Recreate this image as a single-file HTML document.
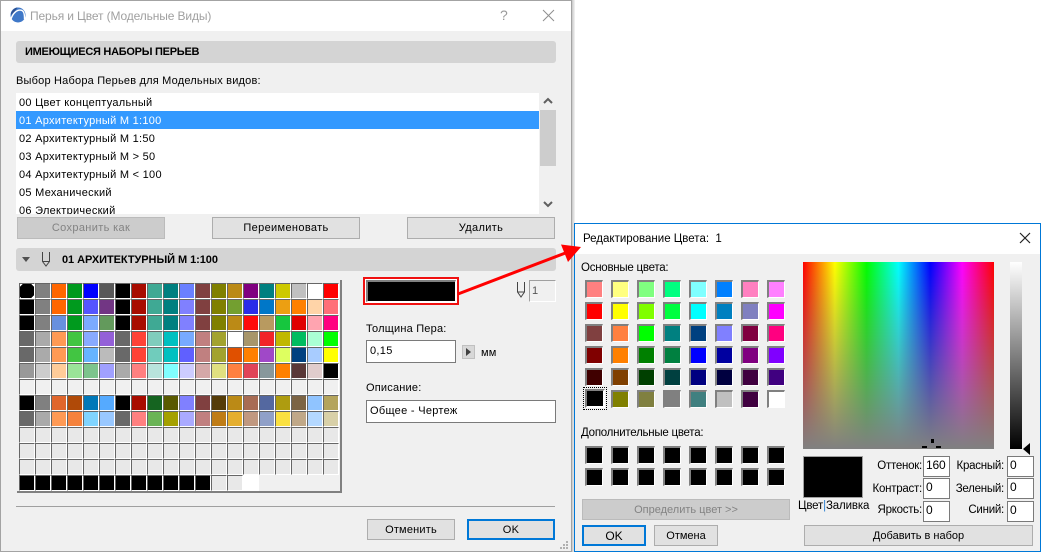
<!DOCTYPE html>
<html lang="ru"><head><meta charset="utf-8"><title>Перья и Цвет</title>
<style>
html,body{margin:0;padding:0;background:#fff}
#p{position:relative;width:1041px;height:552px;overflow:hidden;background:#fff;font:11px "Liberation Sans",sans-serif;color:#000}
#p div,#p span,#p svg{position:absolute;box-sizing:border-box}
.t{white-space:nowrap;line-height:14px;letter-spacing:.2px}
.b{background:#e1e1e1;border:1px solid #adadad;text-align:center;line-height:21px;letter-spacing:.35px;white-space:nowrap}
.d{background:#ccc;border-color:#bbb;color:#838383}
.f{border:2px solid #0078d7;line-height:19px}
.h{background:#d4d4d4;border-radius:3px}
.in{background:#fff;border:1px solid #7a7a7a;white-space:nowrap;letter-spacing:.3px;padding-left:3px}
.r{left:19px;white-space:nowrap;letter-spacing:.28px;line-height:18px;height:18px}
#g{left:19px;top:283px;width:320px;display:flex;flex-wrap:wrap}
#g i{display:block;box-sizing:border-box;width:16px;height:16px;border-top:1px solid #666;border-left:1px solid #666;border-right:1px solid #fff;border-bottom:1px solid #fff}
.c{width:18px;height:18px;border-top:2px solid #808080;border-left:2px solid #808080;border-right:1px solid #fff;border-bottom:1px solid #fff}
.e{font-size:11.5px;letter-spacing:-.25px;white-space:nowrap;line-height:14px;text-align:right}
.n{font-size:12px;background:#fff;border:1px solid #7a7a7a;width:27px;height:21px;line-height:17px;padding-left:2px;letter-spacing:-.2px}
.k{font-size:11px;letter-spacing:0}
</style></head><body><div id="p">

<!-- main dialog -->
<div style="left:0;top:0;width:572px;height:552px;background:#f0f0f0;border:1px solid #a3a3a3;border-left-color:#a3a3a3"></div>
<div style="left:572px;top:0;width:3px;height:552px;background:linear-gradient(to right,#c8c8c8,#f4f4f4)"></div>
<div style="left:1px;top:1px;width:570px;height:30px;background:#fff"></div>
<svg style="left:9px;top:7px" width="18" height="16" viewBox="0 0 18 16"><circle cx="9" cy="8" r="7.500" fill="#3f78c8"/><path d="M2 12C4 6 8 2.500 12 3.200C15 3.800 15.500 7 15.500 12" fill="none" stroke="#fff" stroke-width="1.400"/><path d="M2 8A7.500 7.500 0 0 1 8.500 .5L5.500 4.500Z" fill="#2c4f8f"/></svg>
<div class="t" style="left:30px;top:9px;font-size:12px;color:#a0a0a0;letter-spacing:-.13px">Перья и Цвет (Модельные Виды)</div>
<div class="t" style="left:500px;top:8px;font-size:14px;color:#9a9a9a;letter-spacing:0">?</div>
<svg style="left:542px;top:9px" width="13" height="13" viewBox="0 0 13 13"><path d="M1 1L12 12M12 1L1 12" stroke="#8f8f8f" stroke-width="1"/></svg>

<div class="h" style="left:16px;top:41px;width:540px;height:22px"></div>
<div class="t" style="left:25px;top:45px;font-weight:bold;letter-spacing:-.27px">ИМЕЮЩИЕСЯ НАБОРЫ ПЕРЬЕВ</div>
<div class="t" style="left:16px;top:74px">Выбор Набора Перьев для Модельных видов:</div>

<div style="left:16px;top:93px;width:523px;height:121px;background:#fff;overflow:hidden">
<div style="left:0;top:18px;width:523px;height:18px;background:#3399ff"></div>
<div class="r" style="left:3px;top:1px">00 Цвет концептуальный</div>
<div class="r" style="left:3px;top:19px;color:#fff">01 Архитектурный М 1:100</div>
<div class="r" style="left:3px;top:37px">02 Архитектурный М 1:50</div>
<div class="r" style="left:3px;top:55px">03 Архитектурный М &gt; 50</div>
<div class="r" style="left:3px;top:73px">04 Архитектурный М &lt; 100</div>
<div class="r" style="left:3px;top:91px">05 Механический</div>
<div class="r" style="left:3px;top:109px">06 Электрический</div>
</div>
<div style="left:540px;top:110px;width:16px;height:56px;background:#cdcdcd"></div>
<svg style="left:543px;top:97px" width="10" height="8" viewBox="0 0 10 8"><path d="M1 6L5 2L9 6" fill="none" stroke="#606060" stroke-width="2"/></svg>
<svg style="left:543px;top:200px" width="10" height="8" viewBox="0 0 10 8"><path d="M1 2L5 6L9 2" fill="none" stroke="#606060" stroke-width="2"/></svg>

<div class="b d" style="left:17px;top:217px;width:148px;height:22px">Сохранить как</div>
<div class="b" style="left:212px;top:217px;width:148px;height:22px">Переименовать</div>
<div class="b" style="left:407px;top:217px;width:148px;height:22px">Удалить</div>

<div class="h" style="left:16px;top:248px;width:540px;height:23px"></div>
<svg style="left:21px;top:256px" width="10" height="7" viewBox="0 0 10 7"><path d="M1 1H9L5 6Z" fill="#505050"/></svg>
<svg style="left:40px;top:251px" width="12" height="17" viewBox="0 0 12 17"><path d="M2.500 1V10.500L6 15L9.500 10.500V1M2.500 10.500H9.500" fill="none" stroke="#444" stroke-width="1"/></svg>
<div class="t" style="left:62px;top:253px;font-weight:bold;letter-spacing:-.06px">01 АРХИТЕКТУРНЫЙ М 1:100</div>

<!-- pen palette -->
<div style="left:17px;top:280px;width:325px;height:213px;background:#f0f0f0;border-right:2px solid #808080;border-bottom:2px solid #808080"></div>
<div id="g"><i style="background:linear-gradient(135deg,#fff 2px,transparent 2px),linear-gradient(-135deg,#fff 2px,transparent 2px),linear-gradient(45deg,#fff 1px,transparent 1px),linear-gradient(-45deg,#fff 2px,transparent 2px),#000"></i><i style="background:#808080"></i><i style="background:#ff6600"></i><i style="background:#009a1e"></i><i style="background:#0000ff"></i><i style="background:#595959"></i><i style="background:#000"></i><i style="background:#a80c00"></i><i style="background:#3fa994"></i><i style="background:#008080"></i><i style="background:#6a80ff"></i><i style="background:#804040"></i><i style="background:#808000"></i><i style="background:#bb8a16"></i><i style="background:#800080"></i><i style="background:#008080"></i><i style="background:#cdc900"></i><i style="background:#c0c0c0"></i><i style="background:#fff"></i><i style="background:#f00"></i>
<i style="background:#000"></i><i style="background:#808080"></i><i style="background:#ff6600"></i><i style="background:#009a1e"></i><i style="background:#5555ff"></i><i style="background:#723684"></i><i style="background:#000"></i><i style="background:#a80c00"></i><i style="background:#3fa994"></i><i style="background:#008080"></i><i style="background:#8080ff"></i><i style="background:#804040"></i><i style="background:#808000"></i><i style="background:#739f30"></i><i style="background:#2a2ce8"></i><i style="background:#0077c8"></i><i style="background:#ec9f12"></i><i style="background:#ff8000"></i><i style="background:#ffd4a8"></i><i style="background:#ff7078"></i>
<i style="background:#000"></i><i style="background:#808080"></i><i style="background:#6890de"></i><i style="background:#009a1e"></i><i style="background:#7caaff"></i><i style="background:#639a5c"></i><i style="background:#000"></i><i style="background:#a80c00"></i><i style="background:#3fa994"></i><i style="background:#008080"></i><i style="background:#8080ff"></i><i style="background:#804040"></i><i style="background:#808000"></i><i style="background:#bb8a16"></i><i style="background:#ff0a0a"></i><i style="background:#b89a60"></i><i style="background:#16c63e"></i><i style="background:#e00000"></i><i style="background:#ffa4b0"></i><i style="background:#ff0080"></i>
<i style="background:#696969"></i><i style="background:#aaa"></i><i style="background:#ff9a55"></i><i style="background:#42c542"></i><i style="background:#88aaff"></i><i style="background:#9460d8"></i><i style="background:#696969"></i><i style="background:#ff4236"></i><i style="background:#80ccbc"></i><i style="background:#00c0c0"></i><i style="background:#77aaff"></i><i style="background:#c08080"></i><i style="background:#a2a22e"></i><i style="background:#fff"></i><i style="background:#a8966a"></i><i style="background:#f22429"></i><i style="background:#c0b800"></i><i style="background:#00bc60"></i><i style="background:#aaffd4"></i><i style="background:#0f0"></i>
<i style="background:#696969"></i><i style="background:#aaa"></i><i style="background:#ff9a55"></i><i style="background:#42c542"></i><i style="background:#66b4ff"></i><i style="background:#bbb"></i><i style="background:#696969"></i><i style="background:#ff4236"></i><i style="background:#70ccbc"></i><i style="background:#00c0c0"></i><i style="background:#6060ff"></i><i style="background:#c08080"></i><i style="background:#a2a22e"></i><i style="background:#e05000"></i><i style="background:#ff8000"></i><i style="background:#a048c8"></i><i style="background:#deff60"></i><i style="background:#004080"></i><i style="background:#a8ccff"></i><i style="background:#ff0"></i>
<i style="background:#999"></i><i style="background:#ccc"></i><i style="background:#fc9"></i><i style="background:#9ae498"></i><i style="background:#7cc48c"></i><i style="background:#a0a0ff"></i><i style="background:#aaa"></i><i style="background:#ff8080"></i><i style="background:#b8e4dc"></i><i style="background:#80ffff"></i><i style="background:#ccf"></i><i style="background:#d4a8a8"></i><i style="background:#e0e080"></i><i style="background:#ff8040"></i><i style="background:#e04458"></i><i style="background:#88989c"></i><i style="background:#ff8000"></i><i style="background:#5a3838"></i><i style="background:#e0cccc"></i><i style="background:#000"></i>
<i></i><i></i><i></i><i></i><i></i><i></i><i></i><i></i><i></i><i></i><i></i><i></i><i></i><i></i><i></i><i></i><i></i><i></i><i></i><i></i>
<i style="background:#000"></i><i style="background:#808080"></i><i style="background:#e0662c"></i><i style="background:#b04a08"></i><i style="background:#0078b8"></i><i style="background:#55aaff"></i><i style="background:#000"></i><i style="background:#a80c00"></i><i style="background:#156420"></i><i style="background:#5a5a00"></i><i style="background:#8080ff"></i><i style="background:#804040"></i><i style="background:#553c08"></i><i style="background:#bb8a16"></i><i style="background:#a86c54"></i><i style="background:#5468a0"></i><i style="background:#ae9c10"></i><i style="background:#7c6444"></i><i style="background:#90c4ff"></i><i style="background:#b4a45c"></i>
<i style="background:#696969"></i><i style="background:#aaa"></i><i style="background:#ff9a55"></i><i style="background:#f5823c"></i><i style="background:#80d4ff"></i><i style="background:#99c8ff"></i><i style="background:#696969"></i><i style="background:#ff8080"></i><i style="background:#6ab456"></i><i style="background:#a4a000"></i><i style="background:#aaf"></i><i style="background:#c08080"></i><i style="background:#bf7c16"></i><i style="background:#e5ae2e"></i><i style="background:#c09880"></i><i style="background:#90a0c8"></i><i style="background:#fae040"></i><i style="background:#c0a888"></i><i style="background:#b4d8ff"></i><i style="background:#d8d0a8"></i>
<i style="background:#e8e8e8"></i><i style="background:#e8e8e8"></i><i style="background:#e8e8e8"></i><i style="background:#e8e8e8"></i><i style="background:#e8e8e8"></i><i style="background:#e8e8e8"></i><i style="background:#e8e8e8"></i><i style="background:#e8e8e8"></i><i style="background:#e8e8e8"></i><i style="background:#e8e8e8"></i><i style="background:#e8e8e8"></i><i style="background:#e8e8e8"></i><i style="background:#e8e8e8"></i><i style="background:#e8e8e8"></i><i style="background:#e8e8e8"></i><i style="background:#e8e8e8"></i><i style="background:#e8e8e8"></i><i style="background:#e8e8e8"></i><i style="background:#e8e8e8"></i><i style="background:#e8e8e8"></i>
<i style="background:#e8e8e8"></i><i style="background:#e8e8e8"></i><i style="background:#e8e8e8"></i><i style="background:#e8e8e8"></i><i style="background:#e8e8e8"></i><i style="background:#e8e8e8"></i><i style="background:#e8e8e8"></i><i style="background:#e8e8e8"></i><i style="background:#e8e8e8"></i><i style="background:#e8e8e8"></i><i style="background:#e8e8e8"></i><i style="background:#e8e8e8"></i><i style="background:#e8e8e8"></i><i style="background:#e8e8e8"></i><i style="background:#e8e8e8"></i><i style="background:#e8e8e8"></i><i style="background:#e8e8e8"></i><i style="background:#e8e8e8"></i><i style="background:#e8e8e8"></i><i style="background:#e8e8e8"></i>
<i style="background:#e8e8e8"></i><i style="background:#e8e8e8"></i><i style="background:#e8e8e8"></i><i style="background:#e8e8e8"></i><i style="background:#e8e8e8"></i><i style="background:#e8e8e8"></i><i style="background:#e8e8e8"></i><i style="background:#e8e8e8"></i><i style="background:#e8e8e8"></i><i style="background:#e8e8e8"></i><i style="background:#e8e8e8"></i><i style="background:#e8e8e8"></i><i style="background:#e8e8e8"></i><i style="background:#e8e8e8"></i><i style="background:#e8e8e8"></i><i style="background:#e8e8e8"></i><i style="background:#e8e8e8"></i><i style="background:#e8e8e8"></i><i style="background:#e8e8e8"></i><i style="background:#e8e8e8"></i>
<i style="background:#000"></i><i style="background:#000"></i><i style="background:#000"></i><i style="background:#000"></i><i style="background:#000"></i><i style="background:#000"></i><i style="background:#000"></i><i style="background:#000"></i><i style="background:#000"></i><i style="background:#000"></i><i style="background:#000"></i><i style="background:#000"></i><i style="background:#e8e8e8"></i><i style="background:#e8e8e8"></i><i style="border:0;background:#fff"></i></div>

<!-- pen settings -->
<div style="left:363px;top:277px;width:96px;height:28px;border:2px solid #f01010;background:#fff"></div>
<div style="left:366px;top:280px;width:90px;height:22px;background:#000;border:1px solid #808080;border-top-width:2px;border-left-width:2px;border-right-color:#fff;border-bottom-color:#fff"></div>
<svg style="left:515px;top:281px" width="12" height="18" viewBox="0 0 12 18"><path d="M2.500 1V11L6 16L9.500 11V1M2.500 11H9.500" fill="none" stroke="#444" stroke-width="1"/></svg>
<div class="t" style="left:529px;top:280px;width:27px;height:22px;background:#f0f0f0;border:1px solid #fff;border-left:1px solid #a0a0a0;border-top:1px solid #a0a0a0;line-height:20px;padding-left:2px;color:#555">1</div>
<div class="t" style="left:366px;top:322px">Толщина Пера:</div>
<div class="in" style="left:366px;top:340px;width:90px;height:23px;line-height:21px">0,15</div>
<div style="left:462px;top:345px;width:13px;height:14px;background:#d8d8d8;border:1px solid #c0c0c0"></div>
<svg style="left:465px;top:348px" width="7" height="8" viewBox="0 0 7 8"><path d="M1 0V8L6 4Z" fill="#404040"/></svg>
<div class="t" style="left:481px;top:346px">мм</div>
<div class="t" style="left:366px;top:381px">Описание:</div>
<div class="in" style="left:366px;top:400px;width:190px;height:23px;line-height:21px">Общее - Чертеж</div>
<div style="left:16px;top:506px;width:539px;height:1px;background:#a0a0a0"></div>
<div class="b" style="left:367px;top:519px;width:88px;height:21px;letter-spacing:.2px;line-height:20px">Отменить</div>
<div class="b f" style="left:467px;top:519px;width:88px;height:21px">OK</div>
<svg style="left:560px;top:540px" width="9" height="10" viewBox="0 0 9 10"><path d="M6 1h2v2H6zM3 4h2v2H3zM6 4h2v2H6zM0 7h2v2H0zM3 7h2v2H3zM6 7h2v2H6z" fill="#b0b0b0"/></svg>

<!-- color dialog -->
<div style="left:574px;top:223px;width:467px;height:329px;background:#f0f0f0;border:1px solid #0078d7"></div>
<div style="left:575px;top:224px;width:465px;height:30px;background:#fff"></div>
<div class="e" style="left:583px;top:232px;letter-spacing:0">Редактирование Цвета:&nbsp; 1</div>
<svg style="left:1019px;top:232px" width="12" height="12" viewBox="0 0 12 12"><path d="M1 1L11 11M11 1L1 11" stroke="#222" stroke-width="1.200"/></svg>
<div class="e" style="left:581px;top:261px">Основные цвета:</div>

<div class="c" style="left:585px;top:280px;background:#ff8080"></div><div class="c" style="left:611px;top:280px;background:#ffff80"></div><div class="c" style="left:637px;top:280px;background:#80ff80"></div><div class="c" style="left:663px;top:280px;background:#00ff80"></div><div class="c" style="left:689px;top:280px;background:#80ffff"></div><div class="c" style="left:715px;top:280px;background:#0080ff"></div><div class="c" style="left:741px;top:280px;background:#ff80c0"></div><div class="c" style="left:767px;top:280px;background:#ff80ff"></div>
<div class="c" style="left:585px;top:302px;background:#ff0000"></div><div class="c" style="left:611px;top:302px;background:#ffff00"></div><div class="c" style="left:637px;top:302px;background:#80ff00"></div><div class="c" style="left:663px;top:302px;background:#00ff40"></div><div class="c" style="left:689px;top:302px;background:#00ffff"></div><div class="c" style="left:715px;top:302px;background:#0080c0"></div><div class="c" style="left:741px;top:302px;background:#8080c0"></div><div class="c" style="left:767px;top:302px;background:#ff00ff"></div>
<div class="c" style="left:585px;top:324px;background:#804040"></div><div class="c" style="left:611px;top:324px;background:#ff8040"></div><div class="c" style="left:637px;top:324px;background:#00ff00"></div><div class="c" style="left:663px;top:324px;background:#008080"></div><div class="c" style="left:689px;top:324px;background:#004080"></div><div class="c" style="left:715px;top:324px;background:#8080ff"></div><div class="c" style="left:741px;top:324px;background:#800040"></div><div class="c" style="left:767px;top:324px;background:#ff0080"></div>
<div class="c" style="left:585px;top:346px;background:#800000"></div><div class="c" style="left:611px;top:346px;background:#ff8000"></div><div class="c" style="left:637px;top:346px;background:#008000"></div><div class="c" style="left:663px;top:346px;background:#008040"></div><div class="c" style="left:689px;top:346px;background:#0000ff"></div><div class="c" style="left:715px;top:346px;background:#0000a0"></div><div class="c" style="left:741px;top:346px;background:#800080"></div><div class="c" style="left:767px;top:346px;background:#8000ff"></div>
<div class="c" style="left:585px;top:368px;background:#400000"></div><div class="c" style="left:611px;top:368px;background:#804000"></div><div class="c" style="left:637px;top:368px;background:#004000"></div><div class="c" style="left:663px;top:368px;background:#004040"></div><div class="c" style="left:689px;top:368px;background:#000080"></div><div class="c" style="left:715px;top:368px;background:#000040"></div><div class="c" style="left:741px;top:368px;background:#400040"></div><div class="c" style="left:767px;top:368px;background:#400080"></div>
<div style="left:583px;top:387px;width:24px;height:23px;border:1px dotted #000"></div>
<div style="left:585px;top:389px;width:20px;height:19px;background:#000;border:2px solid #808080;border-right-color:#fff;border-bottom-color:#fff"></div><div class="c" style="left:611px;top:390px;background:#808000"></div><div class="c" style="left:637px;top:390px;background:#808040"></div><div class="c" style="left:663px;top:390px;background:#808080"></div><div class="c" style="left:689px;top:390px;background:#408080"></div><div class="c" style="left:715px;top:390px;background:#c0c0c0"></div><div class="c" style="left:741px;top:390px;background:#400040"></div><div class="c" style="left:767px;top:390px;background:#ffffff"></div>

<div class="e" style="left:581px;top:426px">Дополнительные цвета:</div>
<div class="c" style="left:585px;top:446px;background:#000"></div><div class="c" style="left:611px;top:446px;background:#000"></div><div class="c" style="left:637px;top:446px;background:#000"></div><div class="c" style="left:663px;top:446px;background:#000"></div><div class="c" style="left:689px;top:446px;background:#000"></div><div class="c" style="left:715px;top:446px;background:#000"></div><div class="c" style="left:741px;top:446px;background:#000"></div><div class="c" style="left:767px;top:446px;background:#000"></div>
<div class="c" style="left:585px;top:468px;background:#000"></div><div class="c" style="left:611px;top:468px;background:#000"></div><div class="c" style="left:637px;top:468px;background:#000"></div><div class="c" style="left:663px;top:468px;background:#000"></div><div class="c" style="left:689px;top:468px;background:#000"></div><div class="c" style="left:715px;top:468px;background:#000"></div><div class="c" style="left:741px;top:468px;background:#000"></div><div class="c" style="left:767px;top:468px;background:#000"></div>

<div class="b d k" style="left:582px;top:499px;width:208px;height:21px">Определить цвет &gt;&gt;</div>
<div class="b f k" style="left:582px;top:525px;width:64px;height:21px;font-size:12px">OK</div>
<div class="b k" style="left:654px;top:525px;width:64px;height:21px">Отмена</div>

<div style="left:803px;top:262px;width:191px;height:187px;background:linear-gradient(to bottom,rgba(128,128,128,0),#808080),linear-gradient(to right,#f00,#ff0,#0f0,#0ff,#00f,#f0f,#f00)"></div>
<div style="left:931px;top:439px;width:3px;height:4px;background:#000"></div>
<div style="left:922px;top:446px;width:5px;height:2px;background:#000"></div>
<div style="left:936px;top:446px;width:5px;height:2px;background:#000"></div>
<div style="left:1010px;top:262px;width:12px;height:187px;background:linear-gradient(to bottom,#fff,#000)"></div>
<svg style="left:1023px;top:443px" width="8" height="13" viewBox="0 0 8 13"><path d="M7 0V12L0 6Z" fill="#000"/></svg>
<div style="left:803px;top:456px;width:60px;height:42px;background:#000;border:1px solid #a0a0a0"></div>
<div class="e" style="left:798px;top:499px;letter-spacing:-.15px">Цвет<span style="position:static;color:#2a7fd0">|</span>Заливка</div>

<div class="e" style="left:860px;top:459px;width:62px">Оттенок:</div>
<div class="e" style="left:860px;top:482px;width:62px">Контраст:</div>
<div class="e" style="left:860px;top:503px;width:62px">Яркость:</div>
<div class="e" style="left:945px;top:459px;width:59px">Красный:</div>
<div class="e" style="left:945px;top:482px;width:59px">Зеленый:</div>
<div class="e" style="left:945px;top:503px;width:59px">Синий:</div>
<div class="n" style="left:923px;top:456px">160</div>
<div class="n" style="left:923px;top:478px">0</div>
<div class="n" style="left:923px;top:501px">0</div>
<div class="n" style="left:1007px;top:456px">0</div>
<div class="n" style="left:1007px;top:478px">0</div>
<div class="n" style="left:1007px;top:501px">0</div>
<div class="b k" style="left:804px;top:525px;width:229px;height:21px">Добавить в набор</div>

<!-- red arrow -->
<svg style="left:0;top:0" width="1041" height="552" viewBox="0 0 1041 552"><path d="M458 294L568 252" stroke="#f00" stroke-width="3" fill="none"/><path d="M581 247L561 244.500L568 262Z" fill="#f00"/></svg>
</div></body></html>
